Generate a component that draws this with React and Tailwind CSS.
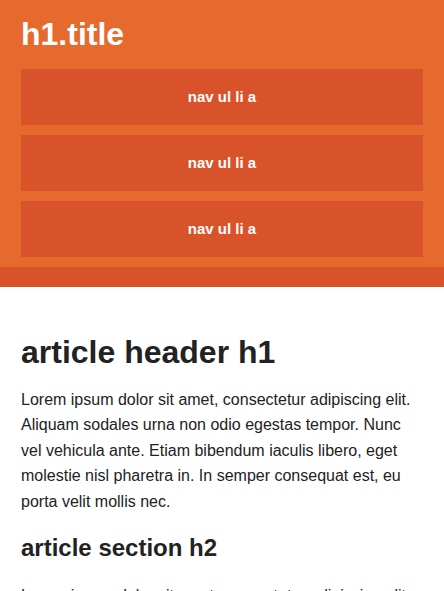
import React from 'react';

const navItems = ['nav ul li a', 'nav ul li a', 'nav ul li a'];

const lorem =
  'Lorem ipsum dolor sit amet, consectetur adipiscing elit. Aliquam sodales urna non odio egestas tempor. Nunc vel vehicula ante. Etiam bibendum iaculis libero, eget molestie nisl pharetra in. In semper consequat est, eu porta velit mollis nec.';

export default function App() {
  return (
    <div className="min-h-screen bg-white font-['Liberation_Sans',Arial,sans-serif] text-[#222]">
      {/* Header */}
      <header className="bg-[#e6692d] border-b-[20px] border-[#d8532a]">
        <div className="px-[21px] pt-[18px] pb-[10px]">
          <h1 className="text-[32px] leading-[32px] font-bold text-white">h1.title</h1>
          <nav className="mt-[19px]">
            <ul className="flex flex-col gap-[10px]">
              {navItems.map((label, i) => (
                <li key={i}>
                  <a className="flex h-[56px] items-center justify-center bg-[#d8532a] text-[15px] font-bold text-white">
                    {label}
                  </a>
                </li>
              ))}
            </ul>
          </nav>
        </div>
      </header>

      {/* Article */}
      <main className="px-[21px] pt-[49px]">
        <article>
          <header>
            <h1 className="text-[32px] leading-[32px] font-bold">article header h1</h1>
            <p className="mt-[18.7px] text-[16px] leading-[25.5px]">{lorem}</p>
          </header>
          <section>
            <h2 className="mt-[22px] text-[24px] leading-[24px] font-bold">article section h2</h2>
            <p className="mt-[22.5px] text-[16px] leading-[25.5px]">{lorem}</p>
          </section>
        </article>
      </main>
    </div>
  );
}
